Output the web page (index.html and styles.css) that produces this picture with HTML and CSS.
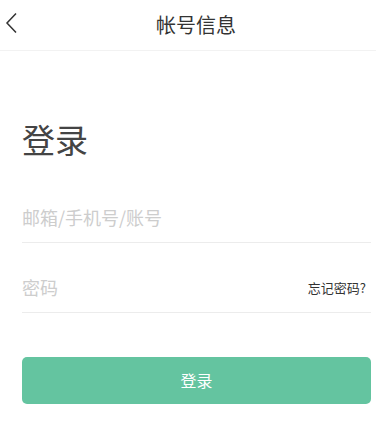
FILE: index.html
```html
<!DOCTYPE html>
<html lang="zh-CN">
<head>
<meta charset="UTF-8" />
<meta name="viewport" content="width=device-width, initial-scale=1" />
<title>帐号信息</title>
<link rel="stylesheet" href="styles.css">
</head>
<body>

<header class="topbar">
  <a class="back" href="#">
    <svg width="14" height="22" viewBox="0 0 14 22"><path d="M11 1.5 L2 11 L11 20.5" fill="none" stroke="#333" stroke-width="1.5"/></svg>
  </a>
  <h2 class="title">帐号信息</h2>
</header>

<form class="login" id="loginForm">
  <h1 class="heading">登录</h1>

  <div class="field">
    <input type="text" name="account" placeholder="邮箱/手机号/账号">
  </div>

  <div class="field field-pass">
    <input type="password" name="password" placeholder="密码">
    <a class="forgot" href="#">忘记密码?</a>
  </div>

  <button type="submit">登录</button>
</form>

</body>
</html>
```

FILE: styles.css
```css
body {
  margin: 0;
  background: #fff;
  font-family: "Noto Sans CJK SC", "Noto Sans", sans-serif;
  color: #333;
}
.topbar {
  height: 50px;
  padding-left: 16px;
  border-bottom: 1px solid #f2f2f2;
  display: flex;
  align-items: center;
  justify-content: center;
  position: relative;
}
.back {
  position: absolute;
  left: 5px;
  top: 12px;
  display: block;
}
.title {
  margin: 0;
  font-size: 20px;
  font-weight: normal;
  color: #333;
  line-height: 1;
}
.login {
  padding: 0 5px 0 22px;
}
.heading {
  margin: 72px 0 36px;
  font-size: 33px;
  font-weight: normal;
  line-height: 1;
  color: #444;
}
.field {
  height: 50px;
  border-bottom: 1px solid #ececec;
  display: flex;
  align-items: center;
}
.field-pass {
  margin-top: 19px;
}
.field input {
  flex: 1;
  border: none;
  outline: none;
  padding: 0;
  font-family: inherit;
  font-size: 18px;
  color: #333;
  background: transparent;
}
.field input::placeholder {
  color: #cdcdcd;
}
.forgot {
  font-size: 13px;
  color: #333;
  text-decoration: none;
  margin-right: 5px;
}
button {
  display: block;
  width: 100%;
  height: 47px;
  margin-top: 44px;
  padding-bottom: 3px;
  border: none;
  border-radius: 5px;
  background: #64c4a0;
  color: #fff;
  font-family: inherit;
  font-size: 16px;
}
```
